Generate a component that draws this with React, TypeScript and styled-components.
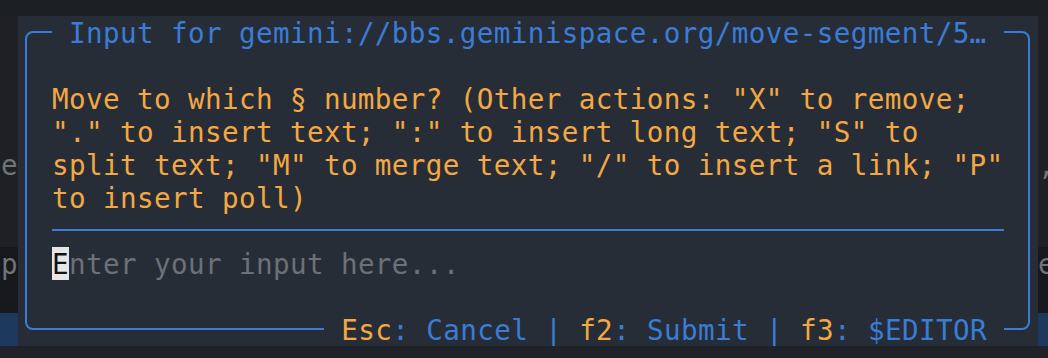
import React from "react";
import styled, { createGlobalStyle } from "styled-components";

const MONO = `"DejaVu Sans Mono", "Liberation Mono", monospace`;
const PANEL = "#272d37";
const BLUE = "#3a7cd6";
const ORANGE = "#f3a843";
const GRAY = "#6c7178";

const Global = createGlobalStyle`
  html, body { margin: 0; padding: 0; background: #1c1f23; }
  body { font-family: ${MONO}; }
`;

const Screen = styled.div`
  position: relative;
  width: 1048px;
  height: 358px;
  overflow: hidden;
  display: flex;
  flex-direction: column;
  background: #1c1f23;
  font-family: ${MONO};
  font-size: 27.6px;
  letter-spacing: 0.38px;
  line-height: 36px;
`;

const Band = styled.div<{ $h: number; $bg: string }>`
  flex: none;
  height: ${(p) => p.$h}px;
  background: ${(p) => p.$bg};
`;

const BgRow = styled.div<{ $bg: string }>`
  flex: none;
  height: 33px;
  display: flex;
  padding-left: 1px;
  background: ${(p) => p.$bg};
  color: #707377;
  white-space: pre;
`;

const BgCell = styled.span`
  flex: none;
  width: 17px;
`;

const BgFill = styled.span`
  flex: 1;
`;

const BgCellRight = styled(BgCell)`
  margin-right: -7px;
`;

const Dialog = styled.div`
  position: absolute;
  left: 18px;
  top: 16px;
  width: 1020px;
  height: 330px;
  box-sizing: border-box;
  padding: 15px 8px 16px 7px;
  background: ${PANEL};
  display: flex;
`;

const Frame = styled.div`
  flex: 1;
  display: flex;
  flex-direction: column;
  border: 2px solid ${BLUE};
  border-radius: 8px;
`;

const Title = styled.div`
  align-self: flex-start;
  margin: -17px 0 0 25px;
  padding: 0 17px;
  height: 33px;
  overflow: hidden;
  background: ${PANEL};
  color: ${BLUE};
  white-space: pre;
`;

const Message = styled.div`
  margin: 33px 0 0 25px;
  color: ${ORANGE};
  white-space: pre;
`;

const Line = styled.div`
  height: 33px;
`;

const Separator = styled.div`
  flex: none;
  margin: 15px 24px 0 25px;
  height: 2px;
  background: ${BLUE};
`;

const InputLine = styled.div`
  margin: 16px 0 0 25px;
  height: 33px;
  color: ${GRAY};
  white-space: pre;
`;

const Cursor = styled.span`
  display: inline-block;
  vertical-align: top;
  width: 17px;
  height: 33px;
  overflow: hidden;
  background: #e6e6e6;
  color: #111;
`;

const Footer = styled.div`
  align-self: flex-end;
  margin: auto 24px -18px 0;
  padding: 0 17px;
  height: 33px;
  overflow: hidden;
  background: ${PANEL};
  color: ${BLUE};
  white-space: pre;
`;

const Key = styled.span`
  color: ${ORANGE};
`;

const bgRows: { bg: string; left?: string; right?: string }[] = [
  { bg: "#1e2024" },
  { bg: "#1e2024" },
  { bg: "#1e2024" },
  { bg: "#1e2024" },
  { bg: "#1e2024", left: "e", right: "," },
  { bg: "#1e2024" },
  { bg: "#1e2024" },
  { bg: "#17181b", left: "p", right: "e" },
  { bg: "#17181b" },
  { bg: "#1d3a5e" },
];

const messageLines = [
  'Move to which § number? (Other actions: "X" to remove;',
  '"." to insert text; ":" to insert long text; "S" to',
  'split text; "M" to merge text; "/" to insert a link; "P"',
  "to insert poll)",
];

const footerItems = [
  { key: "Esc", label: "Cancel" },
  { key: "f2", label: "Submit" },
  { key: "f3", label: "$EDITOR" },
];

export default function App() {
  return (
    <Screen>
      <Global />
      <Band $h={16} $bg="#1c1f23" />
      {bgRows.map((r, i) => (
        <BgRow key={i} $bg={r.bg}>
          <BgCell>{r.left ?? " "}</BgCell>
          <BgFill />
          <BgCellRight>{r.right ?? " "}</BgCellRight>
        </BgRow>
      ))}
      <Band $h={12} $bg="#1f2226" />

      <Dialog>
        <Frame>
          <Title>Input for gemini://bbs.geminispace.org/move-segment/5…</Title>
          <Message>
            {messageLines.map((l, i) => (
              <Line key={i}>{l}</Line>
            ))}
          </Message>
          <Separator />
          <InputLine>
            <Cursor>E</Cursor>nter your input here...
          </InputLine>
          <Footer>
            {footerItems.map((f, i) => (
              <React.Fragment key={f.key}>
                {i > 0 ? " | " : ""}
                <Key>{f.key}</Key>
                {": " + f.label}
              </React.Fragment>
            ))}
          </Footer>
        </Frame>
      </Dialog>
    </Screen>
  );
}
